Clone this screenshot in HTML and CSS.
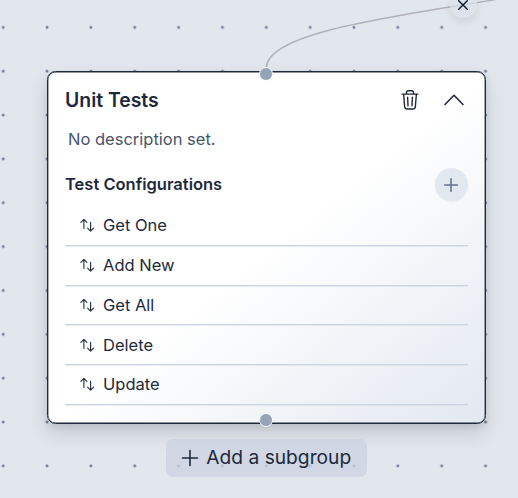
FILE: index.html
```html
<!DOCTYPE html>
<html lang="en">
<head>
<meta charset="utf-8">
<title>Test group</title>
<link rel="stylesheet" href="styles.css">
</head>
<body>
<svg width="0" height="0" class="defs">
  <symbol id="arrows" viewBox="0 0 16 16">
    <path d="M1 4.9 4.3 1.6 7.6 4.9M4.3 1.8V11.4M8.4 11.1 11.7 14.4 15 11.1M11.7 14.2V4.6"/>
  </symbol>
</svg>
<main class="canvas">
  <svg class="dots" width="518" height="498">
    <defs>
      <pattern id="grid" x="-18.7" y="5.4" width="43.85" height="43.85" patternUnits="userSpaceOnUse">
        <circle cx="21.9" cy="21.9" r="1.5" fill="#707e98"/>
      </pattern>
    </defs>
    <rect width="518" height="498" fill="url(#grid)"/>
  </svg>
  <svg class="edge" width="518" height="80">
    <path d="M661 -58.4C661 4.8 266.3 4.8 266.3 68"/>
  </svg>
  <button class="remove" aria-label="Remove edge">
    <svg width="12" height="12" viewBox="0 0 12 12"><path d="M1.7 1.7 10.3 10.3M10.3 1.7 1.7 10.3"/></svg>
  </button>

  <section class="card">
    <header class="card-head">
      <h1>Unit Tests</h1>
      <svg class="trash" width="20" height="22" viewBox="0 0 20 22">
        <path d="M2 5.1H18M3.6 5.3 4.7 18.2Q4.9 20 6.8 20H13.2Q15.1 20 15.3 18.2L16.4 5.3M6.5 4.8V3.5Q6.5 1.7 8.3 1.7H11.7Q13.5 1.7 13.5 3.5V4.8M7.6 8.2 8 16.8M12.4 8.2 12 16.8"/>
      </svg>
      <svg class="chevron" width="22" height="22" viewBox="0 0 22 22"><path d="M2 15.5 11 6.3 20 15.5"/></svg>
    </header>
    <p class="description">No description set.</p>
    <div class="section-head">
      <h2>Test Configurations</h2>
      <button class="add" aria-label="Add configuration">
        <svg width="16" height="16" viewBox="0 0 16 16"><path d="M8 1.7V14.3M1.7 8H14.3"/></svg>
      </button>
    </div>
    <ul class="tests">
      <li><svg class="arrows"><use href="#arrows"/></svg><span>Get One</span></li>
      <li><svg class="arrows"><use href="#arrows"/></svg><span>Add New</span></li>
      <li><svg class="arrows"><use href="#arrows"/></svg><span>Get All</span></li>
      <li><svg class="arrows"><use href="#arrows"/></svg><span>Delete</span></li>
      <li><svg class="arrows"><use href="#arrows"/></svg><span>Update</span></li>
    </ul>
  </section>
  <i class="handle handle-top"></i>
  <i class="handle handle-bottom"></i>
  <button class="subgroup">
    <svg width="18" height="18" viewBox="0 0 18 18"><path d="M9 1.5V16.5M1.5 9H16.5"/></svg>
    <span>Add a subgroup</span>
  </button>
</main>
</body>
</html>
```
FILE: styles.css
```css
* { box-sizing: border-box; }
body { margin: 0; font-family: Inter, sans-serif; color: #1e293b; }
h1, h2, p, ul { margin: 0; padding: 0; }
button { border: 0; padding: 0; font: inherit; color: inherit; }
svg { display: block; flex: none; fill: none; stroke: #1e293b; stroke-width: 1.5; stroke-linecap: round; stroke-linejoin: round; }
.defs { position: absolute; }
.canvas { position: relative; width: 518px; height: 498px; overflow: hidden; background: #e2e7ee; }
.dots { position: absolute; inset: 0; stroke: none; }
.edge { position: absolute; left: 0; top: 0; stroke: #b1b1b7; stroke-width: 1.4; }
.remove {
  position: absolute; left: 450px; top: -9px; width: 27px; height: 27px;
  display: grid; place-items: center; border-radius: 50%;
  background: rgba(218, 225, 236, .75); box-shadow: 0 4px 8px rgba(0, 0, 0, .09);
}
.remove svg { margin-left: -1px; stroke: #0f172a; stroke-width: 1.4; }
.card {
  position: absolute; left: 47px; top: 71px; width: 439px; height: 352.5px;
  padding: 15px 17px 0; border: 1px solid #1e293b; border-radius: 8.5px;
  background: linear-gradient(to bottom right, #fff 0%, #fff 50%, #e2e8f0 100%);
  box-shadow: inset 0 0 0 .4px #1e293b, 0 10px 20px rgba(0, 0, 0, .13), 0 3px 7px rgba(0, 0, 0, .08);
}
.card-head { display: flex; align-items: center; height: 26px; }
h1 { flex: 1; font-size: 19.4px; line-height: 26px; font-weight: 600; }
.chevron { margin-left: 23px; margin-right: 3px; stroke-width: 1.6; }
.trash { stroke-width: 1.4; }
.description { margin: 14px 0 0 3px; font-size: 16.5px; line-height: 24px; color: #475569; }
.section-head { display: flex; align-items: center; justify-content: space-between; height: 33px; margin-top: 17px; }
h2 { margin-top: -2px; font-size: 16.5px; line-height: 24px; font-weight: 600; }
.add {
  display: grid; place-items: center; width: 33px; height: 33px; border-radius: 50%;
  background: #e2e8f0; box-shadow: 0 1px 2px rgba(0, 0, 0, .05);
}
.add svg { margin-left: -1px; stroke: #64748b; stroke-width: 1.6; }
.tests { margin-top: 5.1px; margin-right: .5px; list-style: none; }
.tests li {
  display: flex; align-items: center; gap: 9px; height: 39.8px;
  padding-left: 14.5px; border-bottom: 1px solid #cbd5e1;
  box-shadow: 0 1px rgba(203, 213, 225, .4);
  font-size: 16.5px; line-height: 24px;
}
.tests span { margin-top: -.6px; }
.arrows { width: 14.5px; height: 14.5px; stroke-width: 1.2; }
.handle {
  position: absolute; left: 259.3px; width: 14px; height: 14px;
  border: 1.2px solid #fff; border-radius: 50%; background: #94a3b8;
}
.handle-top { top: 67.4px; }
.handle-bottom { top: 413px; }
.subgroup {
  position: absolute; left: 166px; top: 438.5px; width: 201px; height: 38px;
  display: flex; align-items: center; justify-content: center; gap: 7.5px;
  padding-right: 1px; border-radius: 7px; background: rgba(203, 210, 225, .75);
  font-size: 19.2px; line-height: 28px;
}
.subgroup span { margin-top: -1px; }
.subgroup svg { stroke-width: 1.6; }
```
